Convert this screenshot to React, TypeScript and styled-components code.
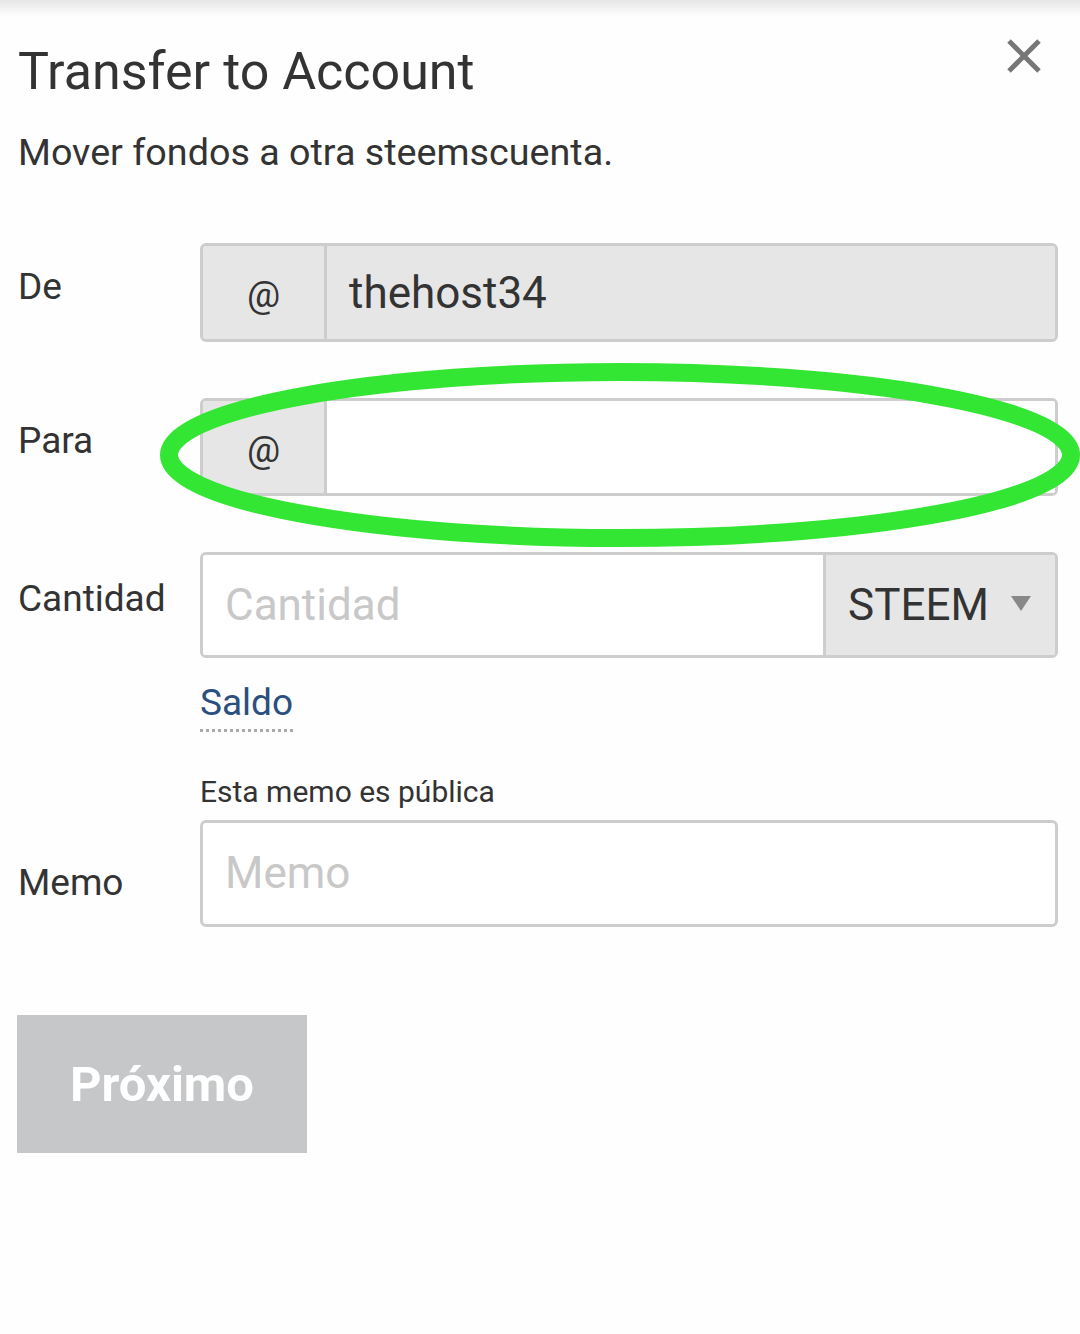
import React from "react";
import styled, { createGlobalStyle } from "styled-components";

const Global = createGlobalStyle`
  html, body { margin: 0; padding: 0; background: #fefefe; }
  body { font-family: Roboto, "Noto Sans", sans-serif; color: #333; }
  * { box-sizing: border-box; }
`;

const Page = styled.div`
  position: relative;
  width: 1080px;
  height: 1334px;
  overflow: hidden;
  background: #fefefe;
  padding: 0 22px 0 18px;
`;

const TopShade = styled.div`
  height: 16px;
  margin: 0 -22px 0 -18px;
  background: linear-gradient(#e6e6e6, #fefefe);
`;

const Header = styled.div`
  display: flex;
  justify-content: space-between;
  align-items: flex-start;
  margin-top: 25px;
`;

const Title = styled.h1`
  margin: 0;
  font-size: 52px;
  line-height: 61px;
  font-weight: 400;
  color: #333;
`;

const CloseButton = styled.button`
  border: 0;
  background: none;
  padding: 0;
  margin: -5px 14px 0 0;
  width: 40px;
  height: 40px;
  display: flex;
  align-items: center;
  justify-content: center;
`;

const Subtitle = styled.p`
  margin: 28px 0 0;
  font-size: 37.7px;
  line-height: 44px;
  color: #333;
`;

const Row = styled.div<{ $top: number }>`
  display: grid;
  grid-template-columns: 182px 1fr;
  align-items: center;
  margin-top: ${(p) => p.$top}px;
`;

const Label = styled.label<{ $shift?: number }>`
  font-size: 37px;
  line-height: 44px;
  color: #333;
  transform: translateY(${(p) => p.$shift ?? -6}px);
`;

const Group = styled.div<{ $h: number; $muted?: boolean }>`
  display: flex;
  height: ${(p) => p.$h}px;
  border: 3px solid #cdcdcd;
  border-radius: 6px;
  overflow: hidden;
  background: ${(p) => (p.$muted ? "#e6e6e6" : "#fff")};
`;

const Addon = styled.div`
  width: 124px;
  flex: none;
  background: #e6e6e6;
  border-right: 3px solid #cdcdcd;
  display: flex;
  align-items: center;
  justify-content: center;
  font-size: 37px;
  color: #333;
  padding-top: 4px;
`;

const Field = styled.div<{ $disabled?: boolean }>`
  flex: 1;
  display: flex;
  align-items: center;
  padding: 0 22px;
  background: ${(p) => (p.$disabled ? "#e6e6e6" : "#fff")};
  font-size: 44px;
  color: ${(p) => (p.$disabled ? "#333" : "#c8c8c8")};
`;

const Select = styled.div`
  width: 232px;
  flex: none;
  background: #e6e6e6;
  border-left: 3px solid #cdcdcd;
  display: flex;
  align-items: center;
  justify-content: space-between;
  padding: 0 24px 0 22px;
  font-size: 44px;
  color: #333;
`;

const Triangle = styled.span`
  width: 0;
  height: 0;
  border-left: 10px solid transparent;
  border-right: 10px solid transparent;
  border-top: 15px solid #888;
  margin-top: -4px;
`;

const Saldo = styled.a`
  grid-column: 2;
  justify-self: start;
  margin-top: 23px;
  font-size: 37px;
  line-height: 44px;
  color: #2b4f7e;
  text-decoration: none;
  padding-bottom: 4px;
  border-bottom: 3px dotted #aaa;
`;

const Note = styled.div`
  font-size: 30px;
  line-height: 36px;
  color: #333;
  margin-bottom: 10px;
`;

const MemoCol = styled.div`
  display: flex;
  flex-direction: column;
`;

const Textarea = styled.div`
  height: 107px;
  border: 3px solid #cdcdcd;
  border-radius: 6px;
  padding: 24px 22px 0;
  font-size: 44px;
  line-height: 52px;
  color: #c8c8c8;
  background: #fff;
`;

const MemoLabel = styled(Label)`
  align-self: end;
  margin-bottom: 22px;
`;

const NextButton = styled.button`
  display: block;
  margin: 88px 0 0 -1px;
  width: 290px;
  height: 138px;
  border: 0;
  background: #c6c7c9;
  color: #fff;
  font-family: Roboto, "Noto Sans", sans-serif;
  font-weight: 700;
  font-size: 49px;
  padding: 0;
`;

const Annotation = styled.svg`
  position: absolute;
  left: 0;
  top: 0;
  pointer-events: none;
`;

export default function App() {
  return (
    <>
      <Global />
      <Page>
        <TopShade />
        <Header>
          <Title>Transfer to Account</Title>
          <CloseButton aria-label="Cerrar">
            <svg width="36" height="36" viewBox="0 0 36 36">
              <path d="M3 3 L33 33 M33 3 L3 33" stroke="#777" strokeWidth="5" />
            </svg>
          </CloseButton>
        </Header>
        <Subtitle>Mover fondos a otra steemscuenta.</Subtitle>

        <Row $top={69}>
          <Label>De</Label>
          <Group $h={99} $muted>
            <Addon>@</Addon>
            <Field $disabled>thehost34</Field>
          </Group>
        </Row>

        <Row $top={56}>
          <Label>Para</Label>
          <Group $h={98}>
            <Addon>@</Addon>
            <Field />
          </Group>
        </Row>

        <Row $top={56}>
          <Label>Cantidad</Label>
          <Group $h={106}>
            <Field>Cantidad</Field>
            <Select>
              STEEM
              <Triangle />
            </Select>
          </Group>
          <Saldo href="#">Saldo</Saldo>
        </Row>

        <Row $top={42}>
          <MemoLabel $shift={0}>Memo</MemoLabel>
          <MemoCol>
            <Note>Esta memo es pública</Note>
            <Textarea>Memo</Textarea>
          </MemoCol>
        </Row>

        <NextButton>Próximo</NextButton>

        <Annotation width="1080" height="1334" viewBox="0 0 1080 1334">
          <ellipse cx="620" cy="455" rx="451" ry="83" fill="none" stroke="#33e633" strokeWidth="18" />
        </Annotation>
      </Page>
    </>
  );
}
